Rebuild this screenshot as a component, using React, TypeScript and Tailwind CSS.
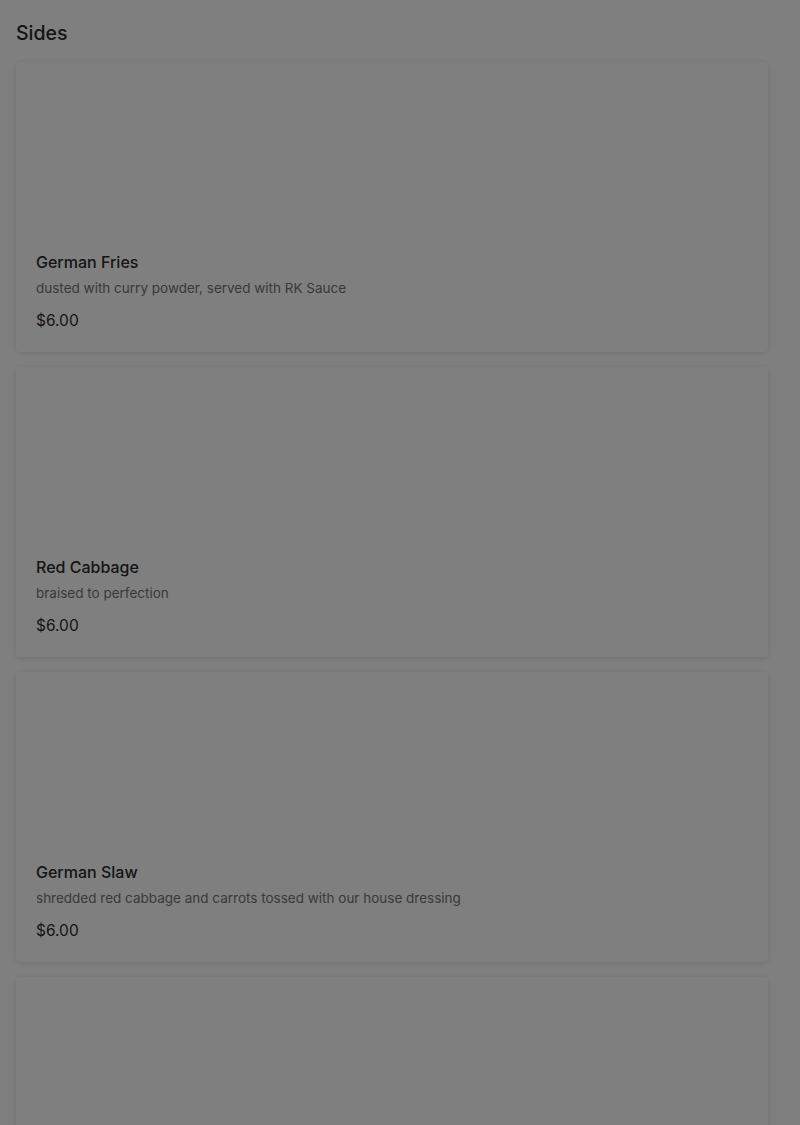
const items = [
  {
    name: "German Fries",
    description: "dusted with curry powder, served with RK Sauce",
    price: "$6.00",
  },
  { name: "Red Cabbage", description: "braised to perfection", price: "$6.00" },
  {
    name: "German Slaw",
    description: "shredded red cabbage and carrots tossed with our house dressing",
    price: "$6.00",
  },
];

const MenuCard = ({ item }: { item: (typeof items)[number] }) => (
  <div className="bg-white rounded shadow-[0_1px_6px_rgba(0,0,0,0.12)] overflow-hidden">
    <div className="h-[168px] bg-white" />
    <div className="px-5 pt-5 pb-[19px]">
      <h3 className="text-[16px] leading-6 font-medium text-[#2a2a2a]">{item.name}</h3>
      <p className="mt-1 text-[13.5px] leading-5 text-[#737373]">{item.description}</p>
      <p className="mt-[11px] text-[15.5px] leading-6 text-[#2a2a2a]">{item.price}</p>
    </div>
  </div>
);

export default function App() {
  // modal backdrop is open, so the page underneath is locked
  return (
    <div
      className="h-screen overflow-hidden bg-white"
      style={{ fontFamily: "Inter, 'Noto Sans', sans-serif" }}
    >
      <div className="px-4 pr-[32px]">
        <h2 className="pt-[19px] pb-[15px] text-[19.5px] leading-7 font-medium text-[#2a2a2a]">
          Sides
        </h2>
        <div className="flex flex-col gap-[15px]">
          {items.map((item) => (
            <MenuCard key={item.name} item={item} />
          ))}
          {/* next card, its text lies below the fold */}
          <div className="h-[290px] bg-white rounded shadow-[0_1px_6px_rgba(0,0,0,0.12)]" />
        </div>
      </div>
      <div className="fixed inset-0 bg-black/50" />
    </div>
  );
}
